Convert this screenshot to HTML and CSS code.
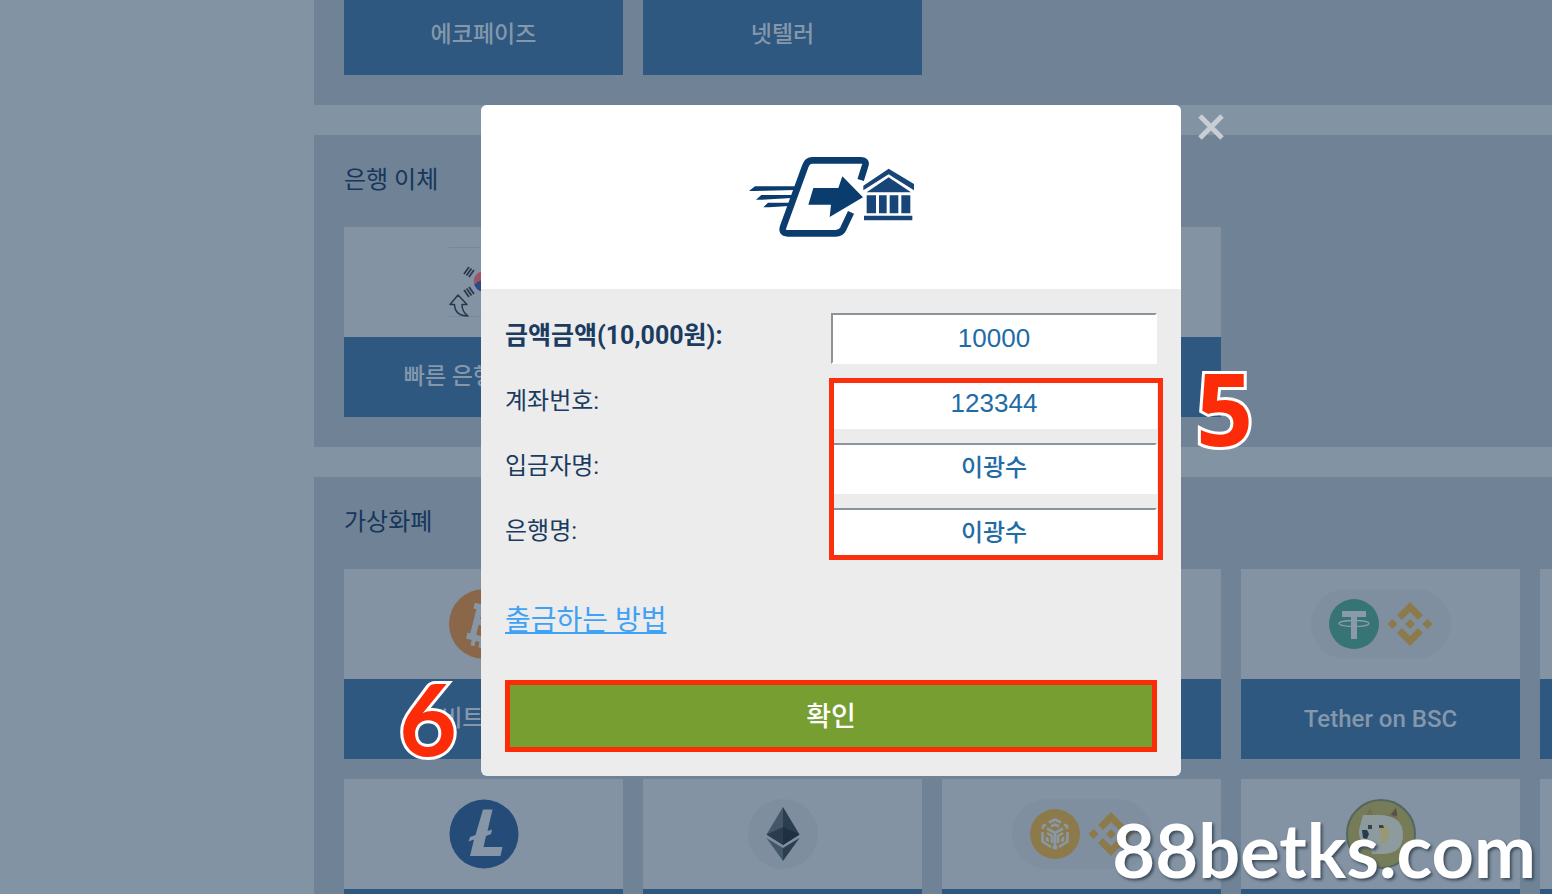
FILE: index.html
```
<!DOCTYPE html>
<html lang="ko">
<head>
    <meta charset="UTF-8">
    <meta name="viewport" content="width=device-width, initial-scale=1.0">
    <title>출금</title>
    <link rel="stylesheet" href="styles.css">
</head>
<body>
    <svg class="root">
        <defs>
            <symbol id="bnb" viewBox="0 0 46 46">
                <path d="M23 1 L36 14 31 19 23 11 15 19 10 14Z M23 45 L36 32 31 27 23 35 15 27 10 32Z M23 18 L28 23 23 28 18 23Z M5.500 18 L10.500 23 5.500 28 .5 23Z M40.500 18 L45.500 23 40.500 28 35.500 23Z" fill="#8d7a4b"/>
            </symbol>
        </defs>
    </svg>

    <main class="page">
        <section class="group group-top">
            <div class="cards">
                <div class="card"><div class="name">에코페이즈</div></div>
                <div class="card"><div class="name">넷텔러</div></div>
            </div>
        </section>

        <section class="group">
            <h2>은행 이체</h2>
            <div class="cards">
                <div class="card">
                    <div class="logo">
                        <svg width="70" height="70" viewBox="0 0 70 70">
                            <path d="M0 .5H70M0 69.500H70" stroke="#778797" fill="none"/>
                            <circle cx="35" cy="35" r="10" fill="#2c4a80"/>
                            <path d="M25.500 38a10 10 0 1 1 19 -6q-5 4-9.500 2t-9.500 4" fill="#9c5567"/>
                            <path d="M16 27l5-7M18.500 28.500l5-7M21 30l5-7M16 43l5 7M18.500 41.500l5 7M21 40l5 7" transform="translate(-1 0)" stroke="#2b3a4b" stroke-width="1.800"/>
                            <path d="M9 48L1 57.500H5.500Q6 69 19 69Q13 65 13 57.500H18Z" fill="none" stroke="#24384e" stroke-width="1.500" stroke-linejoin="round"/>
                        </svg>
                    </div>
                    <div class="name">빠른 은행 입출금</div>
                </div>
                <div class="card"><div class="logo"></div><div class="name"></div></div>
                <div class="card"><div class="logo"></div><div class="name"></div></div>
            </div>
        </section>

        <section class="group">
            <h2>가상화폐</h2>
            <div class="cards">
                <div class="card">
                    <div class="logo">
                        <svg width="70" height="70" viewBox="0 0 70 70">
                            <circle cx="35" cy="35" r="35" fill="#8b674a"/>
                            <g transform="rotate(14 35 35)" fill="none" stroke="#8796a5">
                                <path d="M21 19.500H37a7 7 0 0 1 0 14.500H28M28 34H38a8 8 0 0 1 0 16.500H21M27 19V51" stroke-width="6"/>
                                <path d="M29 11v8M37 11v8M29 51v8M37 51v8" stroke-width="4"/>
                            </g>
                        </svg>
                    </div>
                    <div class="name">비트코인</div>
                </div>
                <div class="card"><div class="logo"></div><div class="name"></div></div>
                <div class="card"><div class="logo"></div><div class="name"></div></div>
                <div class="card">
                    <div class="logo">
                        <div class="pill">
                            <svg width="50" height="50" viewBox="0 0 50 50">
                                <circle cx="25" cy="25" r="25" fill="#377475"/>
                                <path d="M13 12H37V18H28V40H22V18H13Z" fill="#8a9aab"/>
                                <ellipse cx="25" cy="24.500" rx="15" ry="3" fill="none" stroke="#8a9aab" stroke-width="1.300"/>
                            </svg>
                            <svg width="46" height="46"><use href="#bnb"/></svg>
                        </div>
                    </div>
                    <div class="name name-en">Tether on BSC</div>
                </div>
                <div class="card"><div class="logo"></div><div class="name"></div></div>

                <div class="card">
                    <div class="logo">
                        <svg width="70" height="70" viewBox="0 0 70 70">
                            <circle cx="35" cy="35" r="34.500" fill="#254b79"/>
                            <path d="M34 10.500H43.500L38.500 32 43 30.500 42 35 37 37 34.500 48H53.500L51.500 57H21L25 40.500 19.500 42.500 21 38 26.500 36Z" fill="#8796a6"/>
                        </svg>
                    </div>
                    <div class="name"></div>
                </div>
                <div class="card">
                    <div class="logo">
                        <svg width="70" height="70" viewBox="0 0 70 70">
                            <circle cx="35" cy="35" r="35" fill="#7e8e9e"/>
                            <path d="M35 8V46L18.500 35.500Z" fill="#44576a"/>
                            <path d="M35 8V46L51.500 35.500Z" fill="#2b3e50"/>
                            <path d="M35 28V46L18.500 35.500Z" fill="#2a3c4e"/>
                            <path d="M35 28V46L51.500 35.500Z" fill="#1f3042"/>
                            <path d="M18.500 39L35 49V62Z" fill="#44576a"/>
                            <path d="M51.500 39L35 49V62Z" fill="#2b3e50"/>
                        </svg>
                    </div>
                    <div class="name"></div>
                </div>
                <div class="card">
                    <div class="logo">
                        <div class="pill">
                            <svg width="50" height="50" viewBox="0 0 50 50">
                                <circle cx="25" cy="25" r="25" fill="#8d7a4b"/>
                                <path d="M19 13.500L25 10.500 31 13.500M13 20V17L16 15.500M37 20V17L34 15.500M21 17.500L25 15.500 29 17.500M12.500 23V32.500L21 38M37.500 23V32.500L29 38M17 19.500L25 24 33 19.500M17 24L22 27V34M33 24L28 27V34M17 28V31L19 32M33 28V31L31 32M25 24V39L22.500 38M25 39L27.500 38" fill="none" stroke="#8998a7" stroke-width="2.600"/>
                            </svg>
                            <svg width="46" height="46"><use href="#bnb"/></svg>
                        </div>
                    </div>
                    <div class="name"></div>
                </div>
                <div class="card">
                    <div class="logo">
                        <svg width="70" height="70" viewBox="0 0 70 70">
                            <circle cx="35" cy="35" r="34" fill="#777c58" stroke="#53665f" stroke-width="2"/>
                            <path d="M19 20L24 8 27 16H43L50 8 52 20Z" fill="#746e55"/>
                            <path d="M50 9l-5 7 6 1Z" fill="#574f48"/>
                            <path d="M17 16H35Q57 17 57 36T36 55H26L24 45Q12 44 13 31Z" fill="#8d9b9f"/>
                            <path d="M34 26H39Q44 29 43 36T35 45Z" fill="#9a9774"/>
                            <path d="M16 31h5l2 4-2 5-4-1Z" fill="#263b4c"/>
                            <path d="M22 26h4v4h-4ZM33 26h4l1 3h-5Z" fill="#35444c"/>
                        </svg>
                    </div>
                    <div class="name"></div>
                </div>
                <div class="card"><div class="logo"></div><div class="name"></div></div>
            </div>
        </section>
    </main>

    <div class="overlay">
        <form class="modal">
            <button type="button" class="close" aria-label="닫기">
                <svg width="26" height="26" viewBox="0 0 26 26"><path d="M2 2L24 24M24 2L2 24" stroke="#c8ced3" stroke-width="5"/></svg>
            </button>

            <div class="modal-head">
                <svg width="182" height="110" viewBox="0 6 546 330">
                    <path d="M362 120L376 75Q380 61 362 61H217Q202 61 196 78L130 259Q123 280 143 280H287Q303 280 310 266L333 217" fill="none" stroke="#0a3c6e" stroke-width="20" stroke-linejoin="round"/>
                    <path d="M220 144H295L307 109 369 172 269 231 273 194H205Z" fill="#0a3c6e"/>
                    <path d="M27 153L45 139H168L164 150 45 153ZM48 179L64 165H158L155 174 66 179ZM70 202L84 188H151L147 198 87 202Z" fill="#0a3c6e"/>
                    <g fill="#174577">
                        <path d="M370 151V137L446 86 522 132V151L446 103Z"/>
                        <path d="M380 157L446 112 513 157Z"/>
                        <path d="M380 166h28v54h-28ZM417 166h23v54h-23ZM449 166h26v54h-26ZM484 166h27v54h-27ZM372 227H517V241H372Z"/>
                    </g>
                </svg>
            </div>

            <div class="modal-body">
                <div class="fields">
                    <div class="row">
                        <label for="amount" class="strong">금액금액(10,000원):</label>
                        <input id="amount" type="text" value="10000">
                    </div>
                    <div class="marked">
                        <div class="row">
                            <label for="account">계좌번호:</label>
                            <input id="account" type="text" value="123344">
                        </div>
                        <div class="row">
                            <label for="holder">입금자명:</label>
                            <input id="holder" type="text" class="kr" value="이광수">
                        </div>
                        <div class="row">
                            <label for="bank">은행명:</label>
                            <input id="bank" type="text" class="kr" value="이광수">
                        </div>
                        <div class="frame"></div>
                    </div>
                </div>
                <a class="howto" href="#">출금하는 방법</a>
                <button type="submit" class="submit">확인</button>
            </div>

            <span class="step step-5">5</span>
            <span class="step step-6">6</span>
        </form>
    </div>

    <div class="watermark">88betks.com</div>
</body>
</html>
```

FILE: styles.css
```
*{box-sizing:border-box;}

body{
  margin:0;
  height:100vh;
  overflow:hidden;
  background:#8293a3;
  color:#1b3b5f;
  font-family:Roboto, "Noto Sans CJK KR", sans-serif;
  font-size:24px;
}

svg{display:block;}
svg.root{width:1px;height:1px;position:absolute;left:-100em;}

/* page behind the dialog */
.page{
  margin-left:314px;
  height:100vh;
  overflow:hidden;
  display:flex;
  flex-direction:column;
  gap:30px;
}

.group{
  flex:none;
  padding:30px;
  background:#6f8296;
  overflow:hidden;
}
.group-top{padding-top:0;}
.group-top .cards{margin-top:-5px;}

.group h2{
  margin:0 0 32px;
  font-size:24px;
  line-height:30px;
  font-weight:400;
  color:#17365a;
}

.cards{
  display:grid;
  grid-template-columns:repeat(5, 279px);
  gap:20px;
}

.logo{
  height:110px;
  display:flex;
  align-items:center;
  justify-content:center;
  background:#8393a3;
}

.pill{
  width:140px;
  height:70px;
  border-radius:35px;
  display:flex;
  align-items:center;
  justify-content:center;
  gap:8px;
  background:#7f8f9f;
}

.name{
  height:80px;
  line-height:80px;
  text-align:center;
  background:#2e5880;
  color:#8497ab;
  font-size:23px;
  font-weight:500;
}
.name-en{font-size:24px;}

/* dialog */
.overlay{
  position:fixed;
  top:0;
  left:0;
  right:0;
  padding:105px 0 0 110px;
  display:flex;
  justify-content:center;
}

.modal{
  position:relative;
  width:700px;
  border-radius:6px;
  background:#ececec;
}

.modal-head{
  height:184px;
  display:flex;
  align-items:center;
  justify-content:center;
  border-radius:6px 6px 0 0;
  background:#fff;
}

.modal-body{padding:24px;}

.close{
  position:absolute;
  left:717px;
  top:9px;
  padding:0;
  border:0;
  background:none;
}

.row{
  display:grid;
  grid-template-columns:1fr 1fr;
  margin-bottom:14px;
}
.row label{line-height:46px;}
.row .strong{
  font-size:25px;
  font-weight:700;
}

.row input{
  width:100%;
  height:51px;
  border:2px solid;
  border-color:#8b949d #fff #fff #8b949d;
  border-radius:0;
  background:#fff;
  color:#1f6ca5;
  font-family:"Liberation Sans", "Noto Sans CJK KR", sans-serif;
  font-size:26px;
  text-align:center;
}
.row input.kr{
  padding-bottom:8px;
  font-size:24px;
  font-weight:500;
}

.marked{position:relative;}
.frame{
  position:absolute;
  left:50%;
  right:-6px;
  top:0;
  bottom:-1px;
  margin-left:-2px;
  border:5px solid #fb2e0d;
  pointer-events:none;
}

.howto{
  display:inline-block;
  margin-top:27px;
  font-size:28px;
  line-height:42px;
  color:#3fa2f4;
}

.submit{
  display:block;
  width:100%;
  height:72px;
  margin-top:38px;
  padding-bottom:4px;
  border:5px solid #fd2c08;
  background:#769e31;
  color:#fff;
  font:500 27px Roboto, "Noto Sans CJK KR", sans-serif;
}

/* numbered marks over the dialog */
.step{
  position:absolute;
  color:#fd2c08;
  -webkit-text-stroke:6px #fff;
  paint-order:stroke fill;
}
.step-5{
  left:715px;
  top:252px;
  font:700 100px/100px "Open Sans", sans-serif;
}
.step-6{
  left:-82px;
  top:562px;
  font:700 100px/100px Lato, sans-serif;
}

.watermark{
  position:fixed;
  right:16px;
  bottom:0;
  font:700 74px/88px Lato, sans-serif;
  color:#fff;
  text-shadow:2px 2px 3px #3d4d5c;
}
```
